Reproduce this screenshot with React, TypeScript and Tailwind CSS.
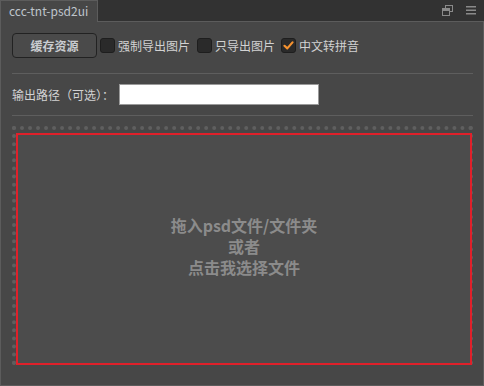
import React, { useState } from 'react';

const FONT = '"Noto Sans CJK SC", "Noto Sans", sans-serif';

function Check({ checked, onToggle }: { checked: boolean; onToggle: () => void }) {
  return (
    <button
      type="button"
      onClick={onToggle}
      className="w-[15px] h-[15px] rounded-[3px] bg-[#2a2a2a] border border-[#1e1e1e] flex items-center justify-center shrink-0"
    >
      {checked && (
        <svg width="11" height="11" viewBox="0 0 11 11">
          <path d="M1.5 5.8 L4.3 8.4 L9.5 2.4" fill="none" stroke="#f5922f" strokeWidth="2.2" strokeLinecap="round" strokeLinejoin="round" />
        </svg>
      )}
    </button>
  );
}

export default function App() {
  const [force, setForce] = useState(false);
  const [onlyImg, setOnlyImg] = useState(false);
  const [pinyin, setPinyin] = useState(true);
  const [path, setPath] = useState('');

  return (
    <div className="w-[484px] h-[386px] bg-[#323232] flex flex-col" style={{ fontFamily: FONT }}>
      {/* tab bar */}
      <div className="h-[22px] flex shrink-0">
        <div className="w-[98px] h-[22px] bg-[#474747] border-l border-t border-r border-[#5c5c5c] pl-[8px] text-[12px] leading-[20px] text-[#bfc5cc]">
          ccc-tnt-psd2ui
        </div>
        <div className="flex-1 h-[22px] border-b border-[#5c5c5c] flex items-center justify-end gap-[13px] pr-[8px]">
          <svg width="11" height="11" viewBox="0 0 11 11">
            <rect x="3.5" y="0.5" width="7" height="6" fill="none" stroke="#8a8a8a" />
            <rect x="0.5" y="3.5" width="7" height="7" fill="#323232" stroke="#8a8a8a" />
            <rect x="1" y="4" width="6" height="2" fill="#8a8a8a" />
          </svg>
          <svg width="10" height="9" viewBox="0 0 10 9">
            <rect x="0" y="0" width="10" height="1.5" fill="#8a8a8a" />
            <rect x="0" y="3.5" width="10" height="1.5" fill="#8a8a8a" />
            <rect x="0" y="7" width="10" height="1.5" fill="#8a8a8a" />
          </svg>
        </div>
      </div>

      {/* panel body */}
      <div className="flex-1 bg-[#474747] border-l border-r border-b border-[#5c5c5c] px-[10px] flex flex-col text-[12px] text-[#d2d2d2]">
        <div className="flex items-center mt-[11px] h-[25px]">
          <button
            type="button"
            className="w-[85px] h-[25px] ml-[1px] rounded-[4px] border border-[#222222] bg-[#4a4a4a] text-[12px] font-bold text-[#c9ccd0]"
          >
            缓存资源
          </button>
          <div className="flex items-center ml-[3px] gap-[3px]">
            <Check checked={force} onToggle={() => setForce(!force)} />
            <span>强制导出图片</span>
          </div>
          <div className="flex items-center ml-[7px] gap-[3px]">
            <Check checked={onlyImg} onToggle={() => setOnlyImg(!onlyImg)} />
            <span>只导出图片</span>
          </div>
          <div className="flex items-center ml-[6px] gap-[3px]">
            <Check checked={pinyin} onToggle={() => setPinyin(!pinyin)} />
            <span>中文转拼音</span>
          </div>
        </div>

        <div className="h-px bg-[#5e5e5e] mt-[15px] ml-[1px]" />

        <div className="flex items-center mt-[10px] h-[21px] ml-[1px]">
          <span className="w-[107px]">输出路径（可选）：</span>
          <input
            value={path}
            onChange={(e) => setPath(e.target.value)}
            className="w-[200px] h-[21px] bg-white border border-[#9a9a9a] outline-none text-black px-1"
          />
        </div>

        <div className="h-px bg-[#5e5e5e] mt-[10px] ml-[1px]" />

        <div className="mt-[10px] ml-[1px] h-[239px] border-4 border-dotted border-[#5f5f5f] flex">
          <div className="flex-1 mt-[3px] -mr-[3px] -mb-[4px] pb-[6px] border-2 border-[#e0202a] bg-[#4c4c4c] flex flex-col items-center justify-center text-[16px] font-bold leading-[21px] text-[#8b8b8b] cursor-pointer">
            <span>拖入psd文件/文件夹</span>
            <span>或者</span>
            <span>点击我选择文件</span>
          </div>
        </div>
      </div>
    </div>
  );
}
